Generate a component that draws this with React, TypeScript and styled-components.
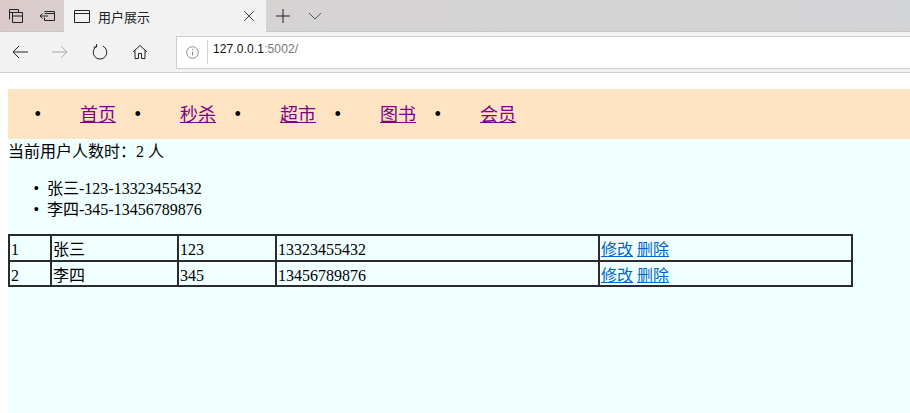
import React from 'react';
import styled, { createGlobalStyle } from 'styled-components';

const GlobalStyle = createGlobalStyle`
    html, body {
        margin: 0;
        padding: 0;
        background: #fff;
        overflow: hidden;
    }
`;

const Window = styled.div`
    width: 910px;
    height: 413px;
    overflow: hidden;
    display: flex;
    flex-direction: column;
    font-family: "Liberation Serif", "Noto Sans CJK SC", serif;
    font-size: 16px;
    color: #000;
`;

const TabStrip = styled.div`
    height: 32px;
    display: flex;
    align-items: stretch;
    background: linear-gradient(90deg, #dcc9c9 0, #d9cfcf 60px, #d6d3d3 280px, #d3d4d6 100%);
    box-shadow: inset 0 -1px 0 #c6c6c6;
`;

const StripButton = styled.div<{ $w: number }>`
    width: ${(p) => p.$w}px;
    display: flex;
    align-items: center;
    justify-content: center;
    color: #222;
`;

const Tab = styled.div`
    width: 202px;
    margin-left: 1px;
    background: #f2f2f2;
    display: flex;
    align-items: center;
    padding-left: 10px;
    box-sizing: border-box;
    color: #222;
`;

const TabTitle = styled.span`
    font-family: "Noto Sans CJK SC", sans-serif;
    font-size: 13px;
    margin-left: 8px;
    flex: 1;
`;

const TabClose = styled.div`
    width: 34px;
    display: flex;
    justify-content: center;
    color: #444;
`;

const Toolbar = styled.div`
    height: 40px;
    display: flex;
    align-items: center;
    background: #f2f2f2;
    border-bottom: 1px solid #cfcfcf;
`;

const ToolButton = styled.div<{ $off?: boolean }>`
    width: 40px;
    display: flex;
    justify-content: center;
    color: ${(p) => (p.$off ? '#a9a9a9' : '#222')};
`;

const AddressBar = styled.div`
    margin-left: 16px;
    flex: 1;
    height: 31px;
    background: #fff;
    border: 1px solid #cfcfcf;
    border-right: none;
    display: flex;
    align-items: center;
`;

const InfoIcon = styled.div`
    width: 30px;
    display: flex;
    justify-content: center;
    color: #8a8a8a;
`;

const Divider = styled.div`
    width: 1px;
    height: 24px;
    background: #d4d4d4;
`;

const Url = styled.span`
    font-family: "Liberation Sans", sans-serif;
    font-size: 12px;
    letter-spacing: 0.12px;
    margin: -7px 0 0 5px;
    color: #111;

    span {
        color: #777;
    }
`;

const Page = styled.div`
    flex: 1;
    background: #fff;
    padding: 16px 0 0 8px;
`;

const Body = styled.div`
    background: #f0ffff;
    height: 100%;
`;

const NavBar = styled.ul`
    display: flex;
    height: 50px;
    margin: 0;
    padding: 0 0 0 40px;
    background: #ffe4c4;
`;

const NavItem = styled.li`
    display: list-item;
    width: 100px;
    text-align: center;
    line-height: 50px;
    font-size: 18px;

    &::marker {
        content: "•\u2004";
        font-size: 20px;
    }

    a {
        color: #800080;
    }
`;

const Count = styled.div`
    height: 24px;
    padding-top: 1px;
    box-sizing: border-box;
    line-height: 24px;
`;

const UserList = styled.ul`
    margin: 15px 0 14px;
    padding-left: 39px;
    line-height: 21px;

    li::marker {
        content: "•\u2002";
    }
`;

const UserTable = styled.table`
    border-collapse: collapse;
    table-layout: fixed;
    width: 843px;
    border: 2px solid #2b2b2b;
`;

const Cell = styled.td<{ $w: number }>`
    width: ${(p) => p.$w}px;
    padding: 4px 1px 0;
    box-sizing: border-box;
    border: 2px solid #2b2b2b;
    line-height: 19.5px;
    white-space: nowrap;

    a {
        color: #0066cc;
    }
`;

const users = [
    { id: 1, name: '张三', code: '123', phone: '13323455432' },
    { id: 2, name: '李四', code: '345', phone: '13456789876' },
];

const navItems = ['首页', '秒杀', '超市', '图书', '会员'];

const App: React.FC = () => {
    return (
        <Window>
            <GlobalStyle />
            <TabStrip>
                <StripButton $w={32}>
                    <svg width="16" height="16" viewBox="0 0 16 16" fill="none" stroke="currentColor">
                        <path d="M1.5 11.5v-10h9v3M1.5 4.5h9M4.5 4.5h10v10h-10zM4.5 8h10" />
                    </svg>
                </StripButton>
                <StripButton $w={31}>
                    <svg width="18" height="16" viewBox="0 0 18 16" fill="none" stroke="currentColor">
                        <path d="M5.5 3.5h10v9h-10v-3M5.5 5.5h10M9 8h-8M3.5 5.5L1 8l2.5 2.5" />
                    </svg>
                </StripButton>
                <Tab>
                    <svg width="16" height="14" viewBox="0 0 16 14" fill="none" stroke="currentColor">
                        <path d="M.5 1.5h15v12H.5zM.5 4.5h15" />
                    </svg>
                    <TabTitle>用户展示</TabTitle>
                    <TabClose>
                        <svg width="12" height="12" viewBox="0 0 12 12" stroke="currentColor">
                            <path d="M1 1l10 10M11 1L1 11" />
                        </svg>
                    </TabClose>
                </Tab>
                <StripButton $w={34}>
                    <svg width="14" height="14" viewBox="0 0 14 14" stroke="currentColor">
                        <path d="M7 0v14M0 7h14" />
                    </svg>
                </StripButton>
                <StripButton $w={30}>
                    <svg width="14" height="8" viewBox="0 0 14 8" fill="none" stroke="#555">
                        <path d="M1 1l6 6 6-6" />
                    </svg>
                </StripButton>
            </TabStrip>
            <Toolbar>
                <ToolButton>
                    <svg width="16" height="14" viewBox="0 0 16 14" fill="none" stroke="currentColor">
                        <path d="M16 7H1M7 1L1 7l6 6" />
                    </svg>
                </ToolButton>
                <ToolButton $off>
                    <svg width="16" height="14" viewBox="0 0 16 14" fill="none" stroke="currentColor">
                        <path d="M0 7h15M9 1l6 6-6 6" />
                    </svg>
                </ToolButton>
                <ToolButton>
                    <svg width="16" height="16" viewBox="0 0 16 16" fill="none" stroke="currentColor">
                        <path d="M5 2.2A6.8 6.8 0 1 0 11 2.2M4.6 0v3H1.6" />
                    </svg>
                </ToolButton>
                <ToolButton>
                    <svg width="16" height="16" viewBox="0 0 16 16" fill="none" stroke="currentColor">
                        <path d="M1 8l7-6.5L15 8M3 6.500v8h3.500v-5h3v5H13v-8" />
                    </svg>
                </ToolButton>
                <AddressBar>
                    <InfoIcon>
                        <svg width="13" height="13" viewBox="0 0 13 13" fill="none" stroke="currentColor">
                            <circle cx="6.5" cy="6.500" r="5.800" />
                            <path d="M6.500 5.500v4M6.500 3v1.200" />
                        </svg>
                    </InfoIcon>
                    <Divider />
                    <Url>
                        127.0.0.1<span>:5002/</span>
                    </Url>
                </AddressBar>
            </Toolbar>
            <Page>
                <Body>
                    <NavBar>
                        {navItems.map((item) => (
                            <NavItem key={item}>
                                <a href="#">{item}</a>
                            </NavItem>
                        ))}
                    </NavBar>
                    <Count>当前用户人数时：2 人</Count>
                    <UserList>
                        {users.map((u) => (
                            <li key={u.id}>
                                {u.name}-{u.code}-{u.phone}
                            </li>
                        ))}
                    </UserList>
                    <UserTable>
                        <tbody>
                            {users.map((u) => (
                                <tr key={u.id}>
                                    <Cell $w={42}>{u.id}</Cell>
                                    <Cell $w={127}>{u.name}</Cell>
                                    <Cell $w={98}>{u.code}</Cell>
                                    <Cell $w={323}>{u.phone}</Cell>
                                    <Cell $w={253}>
                                        <a href="#">修改</a> <a href="#">删除</a>
                                    </Cell>
                                </tr>
                            ))}
                        </tbody>
                    </UserTable>
                </Body>
            </Page>
        </Window>
    );
};

export default App;
